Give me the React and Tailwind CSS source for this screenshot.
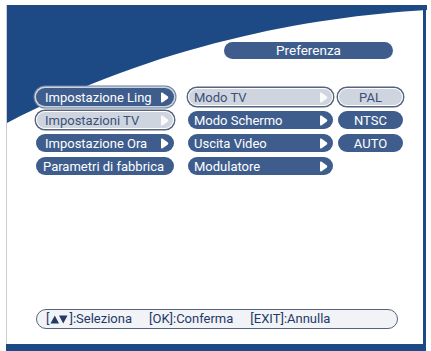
import React from "react";

const font = { fontFamily: "Roboto, 'Liberation Sans', Arial, sans-serif" };

function Arrow({ className = "" }) {
  return (
    <svg width="9" height="11" viewBox="0 0 9 11" className={className}>
      <path d="M1 1.2 C1 0.4 1.6 0.2 2.3 0.6 L7.6 4.3 C8.5 4.9 8.5 6.1 7.6 6.7 L2.3 10.4 C1.6 10.8 1 10.6 1 9.8 Z" fill="white" />
    </svg>
  );
}

function Btn({ label, variant = "blue", arrow = false, center = false, w, pl = "pl-[9px]" }) {
  const base = `h-[18px] rounded-full flex items-center ${w} text-[13px] leading-none font-normal`;
  let cls;
  if (variant === "blue") cls = "bg-[#3e5d8d] text-white";
  else if (variant === "blueFocus") cls = "bg-[#3e5d8d] text-white shadow-[0_0_0_1.5px_#c9d3e2,0_0_0_2.5px_#6d7e9b]";
  else cls = "bg-[#cfd5df] text-[#3b5079] shadow-[inset_0_0_0_1px_#ffffff,0_0_0_1.5px_#56637d]";
  return (
    <div className={`${base} ${cls} ${center ? "justify-center" : `${pl} pr-[5px] justify-between`}`}>
      <span className="whitespace-nowrap">{label}</span>
      {arrow && <Arrow className={variant === "gray" ? "opacity-90" : ""} />}
    </div>
  );
}

export default function App() {
  return (
    <div className="w-[431px] h-[351px] bg-white overflow-hidden" style={font}>
      <div className="ml-[6px] mt-[5px] w-[420px] h-[346px] relative border-l border-[#c9ccd2] border-r-[3px] border-r-[#1d4a85] flex flex-col">
        <svg className="absolute left-0 top-0" width="420" height="130" viewBox="0 0 420 130">
          <path d="M0 0 H420 V5 C300 12 150 40 0 118 Z" fill="#1d4a85" />
        </svg>
        <div className="relative flex-1 flex flex-col">
          <div className="mt-[37px] ml-[217px] w-[169px] h-[17px] rounded-full bg-[#3e5d8d] text-white text-[13.5px] flex items-center justify-center">
            Preferenza
          </div>
          <div className="mt-[29px] flex gap-[14px] pl-[29px]">
            <div className="flex flex-col gap-[5px] w-[138px]">
              <Btn label="Impostazione Ling" variant="blueFocus" arrow w="w-[138px]" />
              <Btn label="Impostazioni TV" variant="gray" arrow w="w-[138px]" />
              <Btn label="Impostazione Ora" arrow w="w-[138px]" />
              <Btn label="Parametri di fabbrica" w="w-[138px]" pl="pl-[7px]" />
            </div>
            <div className="flex flex-col gap-[5px] w-[145px]">
              <Btn label="Modo TV" variant="gray" arrow w="w-[145px]" pl="pl-[6px]" />
              <Btn label="Modo Schermo" arrow w="w-[145px]" pl="pl-[6px]" />
              <Btn label="Uscita Video" arrow w="w-[145px]" pl="pl-[6px]" />
              <Btn label="Modulatore" arrow w="w-[145px]" pl="pl-[6px]" />
            </div>
            <div className="flex flex-col gap-[5px] w-[65px] -ml-[9px]">
              <Btn label="PAL" variant="gray" center w="w-[65px]" />
              <Btn label="NTSC" center w="w-[65px]" />
              <Btn label="AUTO" center w="w-[65px]" />
            </div>
          </div>
          <div className="mt-auto mb-[15px] ml-[29px] w-[362px] h-[20px] rounded-full bg-[#f1f3f6] border-[1.5px] border-[#56637d] flex items-center pl-[9px] text-[13px] text-[#24396a]">
            <span className="whitespace-nowrap flex items-center">
              [
              <svg width="18" height="9" viewBox="0 0 18 9" className="mx-[1px]">
                <path d="M0.5 8.5 L4.75 0.5 L9 8.5 Z" fill="#24396a" />
                <path d="M9 0.5 L17.5 0.5 L13.25 8.5 Z" fill="#24396a" />
              </svg>
              ]:Seleziona
            </span>
            <span className="whitespace-nowrap ml-[17px]">[OK]:Conferma</span>
            <span className="whitespace-nowrap ml-[17px]">[EXIT]:Annulla</span>
          </div>
        </div>
        <div className="h-[7px] bg-[#1d4a85] -ml-px"></div>
      </div>
    </div>
  );
}
